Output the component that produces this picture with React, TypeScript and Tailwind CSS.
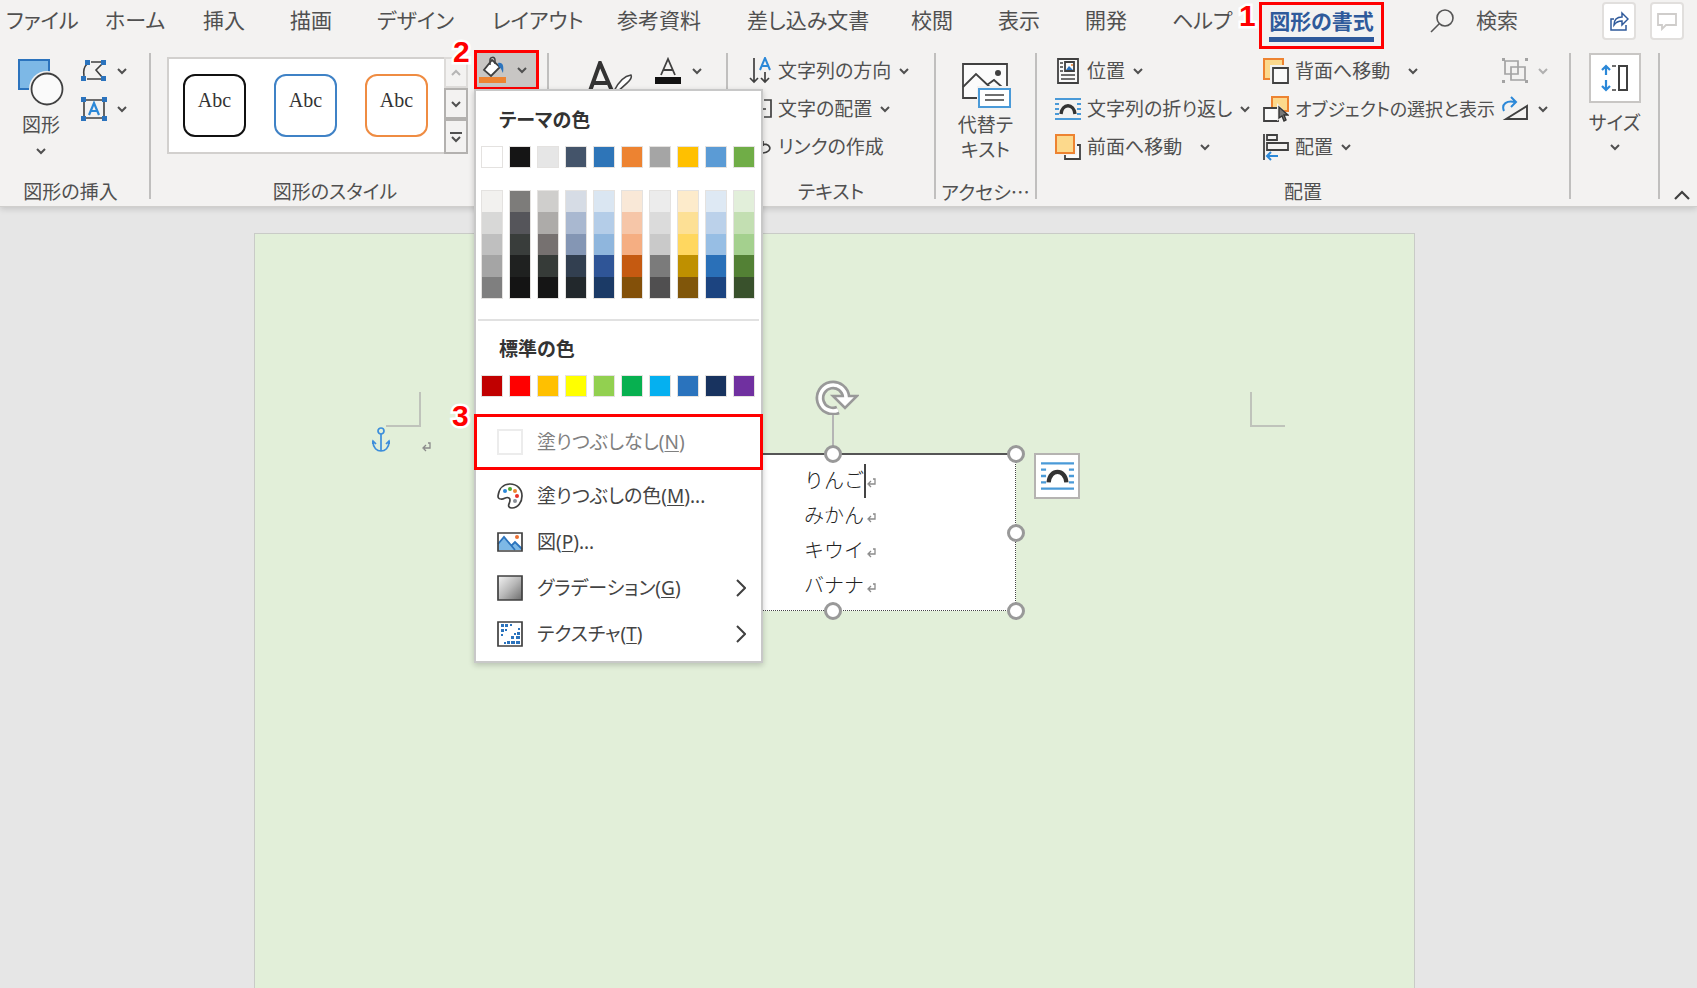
import React from 'react';
import clsx from 'clsx';

const BLUE = '#2b73bd';
const LINE = '#404040';

const tabs = [
  { label: 'ファイル', width: 'w-[99px]' },
  { label: 'ホーム', width: 'w-[98px]' },
  { label: '挿入', width: 'w-[87px]' },
  { label: '描画', width: 'w-[87px]' },
  { label: 'デザイン', width: 'w-[115px]' },
  { label: 'レイアウト', width: 'w-[125px]' },
  { label: '参考資料', width: 'w-[130px]' },
  { label: '差し込み文書', width: 'w-[164px]' },
  { label: '校閲', width: 'w-[87px]' },
  { label: '表示', width: 'w-[87px]' },
  { label: '開発', width: 'w-[87px]' },
  { label: 'ヘルプ', width: 'w-[87px]' },
];

const themeColors = [
  { base: '#ffffff', shades: ['#f2f1ef', '#d8d8d7', '#bfbfbf', '#a5a5a5', '#7f7f7f'] },
  { base: '#151515', shades: ['#7d7c7a', '#55555a', '#393d3b', '#1f2120', '#141414'] },
  { base: '#e6e6e6', shades: ['#cfcecc', '#adaba9', '#767170', '#363b38', '#151515'] },
  { base: '#44546a', shades: ['#d6dce5', '#a9b8d0', '#8496b4', '#323f50', '#22282c'] },
  { base: '#2e75b8', shades: ['#dae6f2', '#b4cde8', '#8fb6dd', '#2f5597', '#1b3a66'] },
  { base: '#ed8331', shades: ['#f9e8d7', '#f6c6a8', '#f5ae82', '#c55a11', '#835009'] },
  { base: '#a5a5a5', shades: ['#ececec', '#dbdbdb', '#c9c9c9', '#7b7b7b', '#504f50'] },
  { base: '#ffc000', shades: ['#fdebcb', '#fde095', '#ffd75f', '#bf9000', '#80560a'] },
  { base: '#5b9bd5', shades: ['#dee9f4', '#bbd1ea', '#97bee4', '#2a70b8', '#1c4480'] },
  { base: '#70ad47', shades: ['#e2efda', '#c3dfb2', '#a4d08e', '#538135', '#39512c'] },
];

const standardColors = [
  '#c00000', '#ff0000', '#ffc000', '#ffff00', '#92d050',
  '#07b050', '#05b0f0', '#2a73bd', '#18335f', '#7030a0',
];

function Chevron({ className = '' }: { className?: string }) {
  return (
    <svg viewBox="0 0 10 8" className={clsx('h-2 w-2.5 shrink-0', className)} fill="none" stroke="currentColor" strokeWidth="2">
      <path d="M1 2l4 4 4-4" />
    </svg>
  );
}

function ShapesIcon() {
  return (
    <svg viewBox="0 0 48 48" className="size-12">
      <rect x="2" y="2" width="30" height="29" fill="#7db8e6" stroke={BLUE} strokeWidth="2" />
      <circle cx="30" cy="31" r="18" fill="#f3f2f1" />
      <circle cx="30" cy="31" r="15.5" fill="#fafafa" stroke={LINE} strokeWidth="1.8" />
    </svg>
  );
}

function EditShapeIcon() {
  return (
    <svg viewBox="0 0 26 24" className="h-6 w-[26px]" fill="none" stroke={LINE} strokeWidth="1.6">
      <path d="M10 3h10M21 5l-6 6 6 7M3 17c-1-5 0-9 3-12M6 20h14" />
      <g fill={BLUE} stroke="none">
        <path d="M4 1h5v5H4zM20 1h5v5h-5zM0 17h5v5H0zM20 17h5v5h-5z" />
      </g>
    </svg>
  );
}

function TextBoxIcon() {
  return (
    <svg viewBox="0 0 26 24" className="h-6 w-[26px]" fill="none" stroke={LINE} strokeWidth="1.6">
      <path d="M3 3h20v18H3z" />
      <path d="M8 18l5-12 5 12M10 14h6" stroke="#2b88d8" strokeWidth="2.2" />
      <path d="M0 0h5v5H0zM21 0h5v5h-5zM0 19h5v5H0zM21 19h5v5h-5z" fill={BLUE} stroke="none" />
    </svg>
  );
}

function BucketIcon() {
  return (
    <svg viewBox="0 0 28 28" className="size-7" fill="none">
      <path d="M13 4l8 7-9 9-7-6z" fill="#fff" stroke={LINE} strokeWidth="1.8" />
      <path d="M11 9V4c0-3 5-4 5 0v4" stroke={LINE} strokeWidth="1.5" />
      <path d="M19 7c5-1 6 3 5 10-2-4-2-5-4-6z" fill={BLUE} />
      <path d="M0 21h27v6H0z" fill="#ed8331" />
    </svg>
  );
}

function FontFillIcon() {
  return (
    <svg viewBox="0 0 28 28" className="size-7" fill="none">
      <path d="M7 18L14 2l7 16M9 13h10" stroke={LINE} strokeWidth="1.8" />
      <path d="M1 20h26v7H1z" fill="#111" />
    </svg>
  );
}

function WordArtIcon() {
  return (
    <svg viewBox="0 0 46 46" className="size-[46px]" fill="none">
      <path d="M2 30L12 2l12 28M5 22h14" stroke="#333" strokeWidth="4" />
      <path d="M26 30c4-8 10-15 17-16 2 4-5 9-13 16z" fill="#fff" stroke="#444" strokeWidth="1.6" />
    </svg>
  );
}

function TextDirectionIcon() {
  return (
    <svg viewBox="0 0 24 28" className="h-7 w-6" fill="none" stroke={LINE} strokeWidth="1.7">
      <path d="M6 1v24M2 21l4 4 4-4M17 15v10M13 21l4 4 4-4" />
      <path d="M12 13l5-12 5 12M14 9h6" stroke="#2b88d8" strokeWidth="2" />
    </svg>
  );
}

function TextAlignIcon() {
  return (
    <svg viewBox="0 0 24 28" className="h-7 w-6" fill="none" stroke={LINE} strokeWidth="1.7">
      <path d="M8 5H2v17h6M16 5h7v17h-7M7 14h11" />
    </svg>
  );
}

function LinkIcon() {
  return (
    <svg viewBox="0 0 24 28" className="h-7 w-6" fill="none" stroke={LINE} strokeWidth="1.7">
      <path d="M11 10H6a5 5 0 000 10h4M15 8v5M11 12c12-4 15 7 4 8" />
    </svg>
  );
}

function AltTextIcon() {
  return (
    <svg viewBox="0 0 50 48" className="h-12 w-[50px]" fill="none" stroke={LINE} strokeWidth="1.8">
      <path d="M2 2h44v34H2z" fill="#fbfbfb" />
      <path d="M2 25l13-13 18 17M26 23l7-5 8 7" />
      <circle cx="37" cy="11" r="3" fill={LINE} stroke="none" />
      <path d="M16 24h34v24H16z" fill="#f3f2f1" stroke="none" />
      <path d="M18 27h31v18H18z" fill="#fff" stroke="#4a9ad8" strokeWidth="2" />
      <path d="M24 33h19M24 38h19" strokeWidth="1.5" />
    </svg>
  );
}

function PositionIcon() {
  return (
    <svg viewBox="0 0 26 28" className="h-7 w-[26px]" fill="none" stroke={LINE} strokeWidth="1.8">
      <path d="M3 2h20v24H3z" fill="#fafafa" />
      <path d="M10 5h9v9h-9z" />
      <path d="M11 13l3-4 4 4z" fill={BLUE} stroke="none" />
      <circle cx="17" cy="8" r="1" fill="#ed8331" stroke="none" />
      <path d="M5 6h3M5 10h3M5 14h3M6 18h14M6 22h14" strokeWidth="1.3" />
    </svg>
  );
}

function WrapIcon({ className = 'h-7 w-[26px]' }: { className?: string }) {
  return (
    <svg viewBox="0 0 26 28" className={className} fill="none" stroke="#4a9ad8" strokeWidth="1.8">
      <path d="M0 4h26M0 9h4M22 9h4M0 14h4M22 14h4M0 19h4M22 19h4M0 24h26" />
      <path d="M6 19c1-11 13-11 14 0" stroke="#333" strokeWidth="3.4" />
    </svg>
  );
}

function BringForwardIcon() {
  return (
    <svg viewBox="0 0 26 28" className="h-7 w-[26px]" fill="none">
      <path d="M10 12h15v14H10z" fill="#fafafa" stroke={LINE} strokeWidth="1.8" />
      <path d="M0 0h22v22H0z" fill="#f3f2f1" />
      <path d="M1 2h18v18H1z" fill="#fcd98c" stroke="#ed8331" strokeWidth="2" />
    </svg>
  );
}

function SendBackwardIcon() {
  return (
    <svg viewBox="0 0 26 28" className="h-7 w-[26px]" fill="none">
      <path d="M1 2h19v20H1z" fill="#fcd98c" stroke="#ed8331" strokeWidth="2" />
      <path d="M7 8h19v20H7z" fill="#f3f2f1" />
      <path d="M10 11h15v15H10z" fill="#fafafa" stroke={LINE} strokeWidth="1.8" />
    </svg>
  );
}

function SelectionPaneIcon() {
  return (
    <svg viewBox="0 0 26 28" className="h-7 w-[26px]" fill="none">
      <path d="M9 2h16v14H9z" fill="#fcd98c" stroke="#ed8331" strokeWidth="2" />
      <path d="M1 13h14v13H1z" fill="#fafafa" stroke={LINE} strokeWidth="1.8" />
      <path d="M14 8v18l4-3 3 5 3-2-2-4 4-1z" fill="#f3f2f1" />
      <path d="M16 12v11l3-2 2 5 2-1-2-5h4z" fill="#777" stroke="#333" strokeWidth="1.4" />
    </svg>
  );
}

function AlignIcon() {
  return (
    <svg viewBox="0 0 26 28" className="h-7 w-[26px]" fill="none" stroke={LINE} strokeWidth="1.8">
      <path d="M1 1v26M4 2h10v5H4zM4 10h21v7H4z" />
      <path d="M15 23H4M8 19l-4 4 4 4" stroke="#2b88d8" strokeWidth="2" />
    </svg>
  );
}

function GroupIcon() {
  return (
    <svg viewBox="0 0 26 28" className="h-7 w-[26px]" fill="none" stroke="#a3a3a3" strokeWidth="1.7">
      <path d="M3 4h13v13H3zM9 10h14v13H9z" />
      <path d="M0 1h3v3H0zM23 1h3v3h-3zM0 23h3v3H0zM23 23h3v3h-3z" fill="#a3a3a3" stroke="none" />
    </svg>
  );
}

function RotateIcon() {
  return (
    <svg viewBox="0 0 26 28" className="h-7 w-[26px]" fill="none">
      <path d="M4 24h21V11z" stroke={LINE} strokeWidth="1.9" />
      <path d="M2 16C-1 9 5 5 13 7M9 2l5 5-5 5" stroke="#2b88d8" strokeWidth="2" />
    </svg>
  );
}

function SizeIcon() {
  return (
    <svg viewBox="0 0 28 28" className="size-7" fill="none">
      <path d="M5 2v9M1 6l4-4 4 4M5 16v10M1 22l4 4 4-4" stroke="#2b88d8" strokeWidth="2.2" />
      <path d="M18 2h8v24h-8z" stroke={LINE} strokeWidth="2" />
      <path d="M11 2h4M11 26h4" stroke={LINE} strokeWidth="1.6" />
    </svg>
  );
}

function PaletteIcon() {
  return (
    <svg viewBox="0 0 26 26" className="size-[26px]" fill="none">
      <path d="M1 13C2 5 7 1 13 1c7 0 12 5 12 12 0 6-4 12-10 12-3 0-4-2-3-4 1-3 2-5 0-6-3-2-5 2-8 1-2 0-3-1-3-3z" stroke={LINE} strokeWidth="1.7" />
      <circle cx="8" cy="8" r="2" fill="#2b88d8" />
      <circle cx="13" cy="6" r="2" fill="#4ea72e" />
      <circle cx="18" cy="8" r="2" fill="#ed8331" />
      <circle cx="20" cy="13" r="2" fill="#e8312a" />
      <circle cx="18" cy="18" r="2" fill="#8a8f98" />
    </svg>
  );
}

function PictureIcon() {
  return (
    <svg viewBox="0 0 26 26" className="size-[26px]" fill="none">
      <path d="M1 4h24v18H1z" fill="#fff" />
      <path d="M1 15l6-7 12 13H1z" fill="#7db8e6" />
      <path d="M14 17l4-4 7 6v2h-9z" fill="#7db8e6" />
      <path d="M1 15l6-7 11 13M14 17l4-4 7 7" stroke={BLUE} strokeWidth="1.8" />
      <circle cx="20" cy="8" r="2" fill="#ed7031" />
      <path d="M1 4h24v18H1z" stroke={LINE} strokeWidth="1.7" />
    </svg>
  );
}

function GradientIcon() {
  return (
    <svg viewBox="0 0 26 26" className="size-[26px]">
      <defs>
        <linearGradient id="gray-fade" x1="0" y1="0" x2="1" y2="1">
          <stop offset="0" stopColor="#f4f4f4" />
          <stop offset="0.5" stopColor="#b9b9b9" />
          <stop offset="1" stopColor="#6c6c6c" />
        </linearGradient>
      </defs>
      <path d="M1 1h24v24H1z" fill="url(#gray-fade)" stroke={LINE} strokeWidth="1.7" />
    </svg>
  );
}

function TextureIcon() {
  return (
    <svg viewBox="0 0 26 26" className="size-[26px]" fill="none">
      <path d="M1 1h24v24H1z" fill="#fff" stroke={LINE} strokeWidth="1.7" />
      <path
        d="M4 3h3v3H4zM8 3h3v3H8zM13 3h2v2h-2zM4 8h3v3H4zM8 8h2v2H8zM4 13h2v2H4zM21 7h2v2h-2zM17 12h2v2h-2zM20 11h3v3h-3zM14 15h3v3h-3zM19 15h4v3h-4zM10 20h3v3h-3zM14 20h4v3h-4zM19 20h4v3h-4zM7 21h2v2H7z"
        fill={BLUE}
      />
    </svg>
  );
}

function ReturnMark() {
  return (
    <svg viewBox="0 0 10 10" className="size-2.5 shrink-0" fill="none" stroke="#8a8a8a" strokeWidth="1.3">
      <path d="M6 1h2v5H2M4 3L1 6l3 3" />
    </svg>
  );
}

function Step({ n, className }: { n: number; className: string }) {
  return (
    <span
      className={clsx(
        "absolute z-30 font-['Liberation_Sans',sans-serif] text-[30px] leading-8 font-bold text-[#ff0000] [paint-order:stroke] [-webkit-text-stroke:5px_white]",
        className,
      )}
    >
      {n}
    </span>
  );
}

interface GroupProps {
  label?: string;
  width: string;
  labelClass?: string;
  children?: React.ReactNode;
}

function Group({ label, width, labelClass, children }: GroupProps) {
  return (
    <section className={clsx('flex h-[146px] shrink-0 flex-col border-r-2 border-[#c0bfbe]', width)}>
      <div className="flex grow">{children}</div>
      {label && <h2 className={clsx('text-center text-[19px] leading-3.5 whitespace-nowrap', labelClass)}>{label}</h2>}
    </section>
  );
}

interface CommandProps {
  icon: React.ReactNode;
  label?: string;
  name?: string;
  arrow?: boolean;
  wide?: boolean;
  small?: boolean;
  disabled?: boolean;
}

function Command({ icon, label, name, arrow, wide, small, disabled }: CommandProps) {
  return (
    <button
      type="button"
      aria-label={name}
      disabled={disabled}
      className={clsx('flex h-[38px] items-center gap-1.5 pb-0.5 whitespace-nowrap', disabled && 'text-[#b0b0b0]')}
    >
      {icon}
      {label && <span className={clsx(small && 'text-lg')}>{label}</span>}
      {arrow && <Chevron className={wide ? 'ml-3' : label ? 'ml-0.5' : 'ml-1'} />}
    </button>
  );
}

function Swatch({ color }: { color: string }) {
  return (
    <button
      type="button"
      aria-label={color}
      className="size-[22px] border border-[#e4e2e0]"
      style={{ backgroundColor: color }}
    />
  );
}

interface MenuItemProps {
  icon: React.ReactNode;
  label: string;
  accessKey: string;
  suffix?: string;
  submenu?: boolean;
}

function MenuItem({ icon, label, accessKey, suffix, submenu }: MenuItemProps) {
  return (
    <button type="button" role="menuitem" className="flex h-[46px] w-full items-center pr-[15px] pl-[21px] text-[#444]">
      {icon}
      <span className="ml-3.5 grow text-left whitespace-nowrap">
        {label}(<u className="underline-offset-2">{accessKey}</u>){suffix}
      </span>
      {submenu && (
        <svg viewBox="0 0 10 18" className="h-[18px] w-2.5" fill="none" stroke={LINE} strokeWidth="2">
          <path d="M1 1l8 8-8 8" />
        </svg>
      )}
    </button>
  );
}

function FillMenu() {
  return (
    <div
      role="menu"
      className="absolute top-[39px] left-0 z-20 w-[289px] border-2 border-[#c8c8c8] bg-white pb-1 shadow-[0_2px_6px_rgba(0,0,0,0.2)]"
    >
      <h3 className="mt-[15px] pl-[23px] text-[19px] leading-7 font-bold text-[#333]">テーマの色</h3>
      <div className="mt-3 flex gap-1.5 pl-[5px]">
        {themeColors.map((c) => (
          <Swatch key={c.base} color={c.base} />
        ))}
      </div>
      <div className="mt-[22px] flex gap-1.5 pl-[5px]">
        {themeColors.map((c) => (
          <div key={c.base} className="flex h-[109px] w-[22px] flex-col border border-[#e4e2e0]">
            {c.shades.map((shade) => (
              <button key={shade} type="button" aria-label={shade} className="grow" style={{ backgroundColor: shade }} />
            ))}
          </div>
        ))}
      </div>
      <hr className="mx-0.5 mt-5 border-t-2 border-[#e1e1e1]" />
      <h3 className="mt-[14px] pl-[23px] text-[19px] leading-7 font-bold text-[#333]">標準の色</h3>
      <div className="mt-3 flex gap-1.5 pl-[5px]">
        {standardColors.map((color) => (
          <Swatch key={color} color={color} />
        ))}
      </div>
      <div className="relative -mx-0.5 mt-[17px] mb-[3px]">
        <button
          type="button"
          role="menuitem"
          className="flex h-[56px] w-full items-center border-[3px] border-[#ff0000] pl-5 text-[#808080]"
        >
          <span className="size-[26px] border-2 border-[#ececec]" />
          <span className="ml-3.5 whitespace-nowrap">
            塗りつぶしなし(<u className="underline-offset-2">N</u>)
          </span>
        </button>
        <Step n={3} className="top-[-14px] left-[-22px]" />
      </div>
      <MenuItem icon={<PaletteIcon />} label="塗りつぶしの色" accessKey="M" suffix="..." />
      <MenuItem icon={<PictureIcon />} label="図" accessKey="P" suffix="..." />
      <MenuItem icon={<GradientIcon />} label="グラデーション" accessKey="G" submenu />
      <MenuItem icon={<TextureIcon />} label="テクスチャ" accessKey="T" submenu />
    </div>
  );
}

function TabBar() {
  return (
    <nav className="flex h-[53px] items-start pt-[2px] pl-1.5 text-[21px] whitespace-nowrap">
      {tabs.map((tab) => (
        <button key={tab.label} type="button" className={clsx('h-[38px] shrink-0 text-left', tab.width)}>
          {tab.label}
        </button>
      ))}
      <div className="relative">
        <button
          type="button"
          className="flex h-[47px] w-[125px] flex-col items-center border-[3px] border-[#ff0000] font-bold text-[#2f5a9b]"
        >
          <span className="border-b-[5px] border-[#2f5a9b] leading-8">図形の書式</span>
        </button>
        <Step n={1} className="top-[-2px] left-[-20px]" />
      </div>
      <label className="ml-[46px] flex h-[38px] grow items-center gap-[22px]">
        <svg viewBox="0 0 24 24" className="size-6 shrink-0" fill="none" stroke="#555" strokeWidth="1.6">
          <circle cx="15" cy="9" r="8" />
          <path d="M9 15l-8 8" />
        </svg>
        <input type="search" placeholder="検索" className="w-20 bg-transparent outline-none placeholder:text-[#555]" />
      </label>
      <div className="flex gap-3.5 pr-[13px]">
        <button type="button" aria-label="共有" className="flex h-[38px] w-[34px] items-center justify-center rounded-sm border-2 border-[#e1dfdd] bg-white">
          <svg viewBox="0 0 20 20" className="size-5" fill="none" stroke="#2f5a9b" strokeWidth="1.5">
            <path d="M5 8H2v11h15v-5" />
            <path d="M5 14c0-5 3-8 8-8V2l6 6-6 6v-4c-4 0-6 1-8 4z" />
          </svg>
        </button>
        <button type="button" aria-label="コメント" className="flex h-[38px] w-[34px] items-center justify-center rounded-sm border-2 border-[#e1dfdd] bg-white">
          <svg viewBox="0 0 20 20" className="size-5" fill="none" stroke="#cfcdcb" strokeWidth="1.8">
            <path d="M1 3h18v11H9l-4 4v-4H1z" />
          </svg>
        </button>
      </div>
    </nav>
  );
}

function StyleGallery() {
  return (
    <div className="mt-1 flex h-[97px]">
      <div className="flex w-[277px] items-center gap-7 border-2 border-r-0 border-[#d2d0ce] bg-white pl-3.5 font-['Liberation_Serif',serif] text-xl text-[#333]">
        <button type="button" className="size-[63px] rounded-xl border-2 border-[#111] pb-3">Abc</button>
        <button type="button" className="size-[63px] rounded-xl border-2 border-[#3f82c6] pb-3">Abc</button>
        <button type="button" className="size-[63px] rounded-xl border-2 border-[#ef8c42] pb-3">Abc</button>
      </div>
      <div className="flex w-6 flex-col">
        <button type="button" aria-label="前の行" className="flex grow items-center justify-center border-2 border-[#dddbd9] text-[#b5b5b5]">
          <Chevron className="rotate-180" />
        </button>
        <button type="button" aria-label="次の行" className="flex grow items-center justify-center border-2 border-[#b3b1af]">
          <Chevron />
        </button>
        <button type="button" aria-label="その他" className="flex grow items-center justify-center border-2 border-[#b3b1af]">
          <svg viewBox="0 0 12 12" className="size-3" fill="none" stroke="currentColor" strokeWidth="2">
            <path d="M0 2h12M2 6l4 4 4-4" />
          </svg>
        </button>
      </div>
    </div>
  );
}

function Ribbon() {
  return (
    <div className="flex h-[153px] text-[19px]">
      <Group label="図形の挿入" width="w-[151px]" labelClass="pr-2">
        <button type="button" className="ml-[17px] flex w-12 flex-col items-center pt-[5px] whitespace-nowrap">
          <ShapesIcon />
          <span className="mt-[3px] leading-8">図形</span>
          <Chevron className="mt-1.5" />
        </button>
        <div className="ml-4 flex flex-col">
          <Command icon={<EditShapeIcon />} name="図形の編集" arrow />
          <Command icon={<TextBoxIcon />} name="テキスト ボックス" arrow />
        </div>
      </Group>

      <Group label="図形のスタイル" width="w-[398px]" labelClass="pr-7">
        <div className="ml-4">
          <StyleGallery />
        </div>
        <div className="relative -mt-[3px] ml-1.5">
          <button
            type="button"
            aria-label="図形の塗りつぶし"
            className="flex h-10 w-[65px] items-center gap-2.5 border-[3px] border-[#ff0000] bg-[#c8c6c4] pl-0.5"
          >
            <BucketIcon />
            <Chevron />
          </button>
          <Step n={2} className="top-[-14px] left-[-21px]" />
          <FillMenu />
        </div>
      </Group>

      <Group width="w-[179px]">
        <button type="button" aria-label="クイック スタイル" className="ml-[39px] h-[46px] pt-2">
          <WordArtIcon />
        </button>
        <div className="ml-5">
          <Command icon={<FontFillIcon />} name="文字の塗りつぶし" arrow />
        </div>
      </Group>

      <Group label="テキスト" width="w-[208px]">
        <div className="ml-5 flex flex-col items-start">
          <Command icon={<TextDirectionIcon />} label="文字列の方向" arrow />
          <Command icon={<TextAlignIcon />} label="文字の配置" arrow />
          <Command icon={<LinkIcon />} label="リンクの作成" />
        </div>
      </Group>

      <Group label="アクセシ…" width="w-[101px]" labelClass="font-['Noto_Sans_CJK_JP',sans-serif]">
        <button type="button" className="flex grow flex-col items-center pt-[9px] leading-[25px]">
          <AltTextIcon />
          <span className="mt-[3px]">代替テ<br />キスト</span>
        </button>
      </Group>

      <Group label="配置" width="w-[534px]">
        <div className="ml-[18px] flex w-52 flex-col items-start">
          <Command icon={<PositionIcon />} label="位置" arrow />
          <Command icon={<WrapIcon />} label="文字列の折り返し" arrow />
          <Command icon={<BringForwardIcon />} label="前面へ移動" arrow wide />
        </div>
        <div className="flex w-[239px] flex-col items-start">
          <Command icon={<SendBackwardIcon />} label="背面へ移動" arrow wide />
          <Command icon={<SelectionPaneIcon />} label="オブジェクトの選択と表示" small />
          <Command icon={<AlignIcon />} label="配置" arrow />
        </div>
        <div className="flex flex-col items-start">
          <Command icon={<GroupIcon />} name="グループ化" arrow disabled />
          <Command icon={<RotateIcon />} name="回転" arrow />
        </div>
      </Group>

      <Group width="w-[89px]">
        <button type="button" className="flex grow flex-col items-center">
          <span className="flex h-[50px] w-[52px] items-center justify-center border-2 border-[#c8c6c4] bg-white">
            <SizeIcon />
          </span>
          <span className="mt-1 leading-8">サイズ</span>
          <Chevron className="mt-1" />
        </button>
      </Group>

      <button type="button" aria-label="リボンを折りたたむ" className="flex grow items-end justify-end pr-[7px] pb-1.5">
        <svg viewBox="0 0 16 10" className="h-2.5 w-4" fill="none" stroke={LINE} strokeWidth="2.2">
          <path d="M1 9l7-7 7 7" />
        </svg>
      </button>
    </div>
  );
}

function Handle({ className }: { className: string }) {
  return <span className={clsx('absolute size-[18px] rounded-full border-[3px] border-[#999] bg-white', className)} />;
}

function SelectedTextBox() {
  return (
    <div className="absolute top-[219px] left-[394px] h-[158px] w-[367px] border border-t-2 border-dotted border-[#444] border-t-[#555] bg-white [border-top-style:solid]">
      <div className="flex flex-col pt-2 pl-[154px] text-xl leading-[35px] font-light text-[#222] [font-feature-settings:normal]">
        {['りんご', 'みかん', 'キウイ', 'バナナ'].map((word, i) => (
          <p key={word} className="flex items-center">
            {word}
            {i === 0 && <span className="-mr-0.5 h-[34px] w-0.5 bg-[#444]" />}
            <span className="ml-[3px] pt-1">
              <ReturnMark />
            </span>
          </p>
        ))}
      </div>
      <span className="absolute top-[-42px] left-[182px] h-[34px] w-0.5 bg-[#b5b5b5]" />
      <svg viewBox="0 0 44 36" className="absolute top-[-76px] left-[165px] h-9 w-11" fill="none">
        <path d="M23 31A13 13 0 1 1 31 18" stroke="#999" strokeWidth="9" />
        <path d="M18 17h24L30 29z" fill="#fff" stroke="#999" strokeWidth="2.6" />
        <path d="M23 31A13 13 0 1 1 31 18v5" stroke="#fff" strokeWidth="3.6" />
      </svg>
      <Handle className="top-[-10px] left-[174px]" />
      <Handle className="top-[-10px] right-[-10px]" />
      <Handle className="top-[69px] right-[-10px]" />
      <Handle className="right-[-10px] bottom-[-10px]" />
      <Handle className="bottom-[-10px] left-[174px]" />
      <button
        type="button"
        aria-label="レイアウト オプション"
        className="absolute top-[-2px] right-[-65px] flex size-[46px] items-center justify-center border-2 border-[#b5b3b1] bg-white"
      >
        <WrapIcon className="h-9 w-[33px]" />
      </button>
    </div>
  );
}

function DocumentPage() {
  return (
    <div className="relative grow border border-b-0 border-[#c9cbc7] bg-[#e2efd9]">
      {/* margin corner marks */}
      <span className="absolute top-[158px] left-[131px] size-[35px] border-r-2 border-b-2 border-[#bfc3bb]" />
      <span className="absolute top-[158px] left-[995px] size-[35px] border-b-2 border-l-2 border-[#bfc3bb]" />
      <svg viewBox="0 0 18 26" className="absolute top-[193px] left-[117px] h-[26px] w-[18px]" fill="none" stroke="#3d8edb" strokeWidth="1.7">
        <circle cx="9" cy="4" r="3" />
        <path d="M9 7v17M1 15c0 12 16 12 16 0M0 17l1-3 3 3M18 17l-1-3-3 3" />
      </svg>
      <span className="absolute top-[208px] left-[167px]">
        <ReturnMark />
      </span>
      <SelectedTextBox />
    </div>
  );
}

export default function App() {
  return (
    <div
      lang="ja"
      className="flex min-h-screen flex-col overflow-hidden bg-[#e6e6e6] font-['Noto_Sans','Noto_Sans_CJK_JP',sans-serif] text-[#505050] [font-feature-settings:'palt']"
    >
      <header className="border-b border-[#d0cfcd] bg-[#f3f2f1] shadow-[0_2px_6px_rgba(0,0,0,0.15)]">
        <TabBar />
        <Ribbon />
      </header>
      <main className="flex grow pt-[26px] pr-[282px] pl-[254px]">
        <DocumentPage />
      </main>
    </div>
  );
}
